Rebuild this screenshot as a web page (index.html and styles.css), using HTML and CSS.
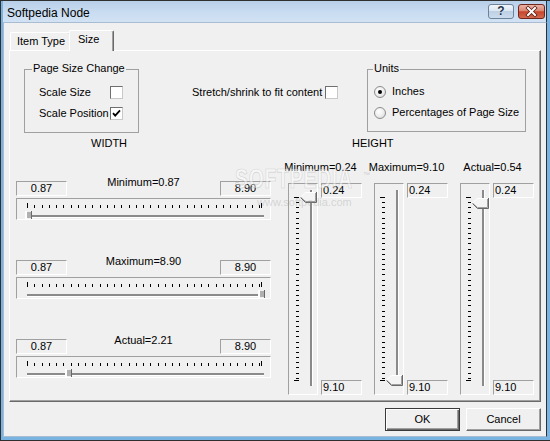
FILE: index.html
```html
<!DOCTYPE html>
<html>
<head>
<meta charset="utf-8">
<title>Softpedia Node</title>
<link rel="stylesheet" href="styles.css">
</head>
<body>
<div class="window">
  <div class="titlebar">
    <span class="title">Softpedia Node</span>
    <div class="caption-buttons">
      <div class="cap-btn help"><span>?</span></div>
      <div class="cap-btn close">
        <svg width="25" height="13" viewBox="0 0 25 13">
          <path d="M9 3L16 10M16 3L9 10" stroke="#5b1c12" stroke-width="3.6" stroke-linecap="square" fill="none"/>
          <path d="M9 3L16 10M16 3L9 10" stroke="#fff" stroke-width="2" stroke-linecap="square" fill="none"/>
        </svg>
      </div>
    </div>
  </div>
  <div class="client">
    <div class="tabs">
      <div class="tab">Item Type</div>
      <div class="tab active">Size</div>
    </div>
    <div class="panel">
      <div class="top-row">
        <div class="group page-size">
          <div class="legend">Page Size Change</div>
          <div class="check-row first"><span class="check-label">Scale Size</span><span class="checkbox"></span></div>
          <div class="check-row second"><span class="check-label">Scale Position</span><span class="checkbox"><svg width="11" height="11" viewBox="0 0 11 11"><path d="M2 5.2L4.2 7.6L9 2.4" stroke="#000" stroke-width="1.8" fill="none"/></svg></span></div>
        </div>
        <div class="stretch"><span>Stretch/shrink to fit content</span><span class="checkbox"></span></div>
        <div class="group units">
          <div class="legend">Units</div>
          <div class="radio-row first"><span class="radio on"></span><span>Inches</span></div>
          <div class="radio-row second"><span class="radio"></span><span>Percentages of Page Size</span></div>
        </div>
      </div>
      <div class="axis-row"><span class="axis-width">WIDTH</span><span>HEIGHT</span></div>
      <div class="lower">
        <div class="width-col">
          <div class="hgroup">
            <div class="hhead"><span class="field center">0.87</span><span class="hlabel">Minimum=0.87</span><span class="field center">8.90</span></div>
            <div class="hslider">
              <svg width="253" height="20" viewBox="0 0 253 20">
                <use href="#hticks"/>
                <rect x="10" y="16" width="237" height="2" fill="#8a8a8a"/>
                <rect x="10" y="18" width="237" height="1" fill="#fff"/>
                <rect x="8" y="12" width="2" height="8" fill="#fff"/>
                <rect x="10" y="13" width="4" height="6" fill="#b0b0b0"/>
                <rect x="14" y="12" width="1" height="8" fill="#696969"/>
              </svg>
            </div>
          </div>
          <div class="hgroup">
            <div class="hhead"><span class="field center">0.87</span><span class="hlabel">Maximum=8.90</span><span class="field center">8.90</span></div>
            <div class="hslider">
              <svg width="253" height="20" viewBox="0 0 253 20">
                <use href="#hticks"/>
                <rect x="10" y="16" width="237" height="2" fill="#8a8a8a"/>
                <rect x="10" y="18" width="237" height="1" fill="#fff"/>
                <rect x="241" y="12" width="2" height="8" fill="#fff"/>
                <rect x="243" y="13" width="4" height="6" fill="#b0b0b0"/>
                <rect x="247" y="12" width="1" height="8" fill="#696969"/>
              </svg>
            </div>
          </div>
          <div class="hgroup">
            <div class="hhead"><span class="field center">0.87</span><span class="hlabel">Actual=2.21</span><span class="field center">8.90</span></div>
            <div class="hslider">
              <svg width="253" height="20" viewBox="0 0 253 20">
                <use href="#hticks"/>
                <rect x="10" y="16" width="237" height="2" fill="#8a8a8a"/>
                <rect x="10" y="18" width="237" height="1" fill="#fff"/>
                <rect x="48" y="12" width="2" height="8" fill="#fff"/>
                <rect x="50" y="13" width="4" height="6" fill="#b0b0b0"/>
                <rect x="54" y="12" width="1" height="8" fill="#696969"/>
              </svg>
            </div>
          </div>
        </div>
        <div class="height-cols">
          <div class="vcol">
            <div class="vlabel"><span>Minimum=0.24</span></div>
            <div class="vbody">
              <div class="vslider">
                <svg width="28" height="210" viewBox="0 0 28 210">
                  <use href="#vticks"/>
                  <rect x="21" y="6" width="2" height="196" fill="#8a8a8a"/>
                  <rect x="23" y="6" width="1" height="196" fill="#fff"/>
                  <polygon points="11,13 16,8 27,8 27,18 16,18" fill="#f4f4f4"/>
                  <path d="M11.5 13L16.5 8.5H26.5" stroke="#fff" fill="none"/>
                  <path d="M12 13.5L16.5 17.5H26.5V9" stroke="#a0a0a0" fill="none"/>
                  <path d="M11.5 13.5L16.5 18.5H27.5V8" stroke="#696969" fill="none"/>
                </svg>
              </div>
              <div class="vfields"><span class="field">0.24</span><span class="field">9.10</span></div>
            </div>
          </div>
          <div class="vcol">
            <div class="vlabel"><span>Maximum=9.10</span></div>
            <div class="vbody">
              <div class="vslider">
                <svg width="28" height="210" viewBox="0 0 28 210">
                  <use href="#vticks"/>
                  <rect x="21" y="6" width="2" height="196" fill="#8a8a8a"/>
                  <rect x="23" y="6" width="1" height="196" fill="#fff"/>
                  <polygon points="11,196 16,191 27,191 27,201 16,201" fill="#f4f4f4"/>
                  <path d="M11.5 196L16.5 191.5H26.5" stroke="#fff" fill="none"/>
                  <path d="M12 196.5L16.5 200.5H26.5V192" stroke="#a0a0a0" fill="none"/>
                  <path d="M11.5 196.5L16.5 201.5H27.5V191" stroke="#696969" fill="none"/>
                </svg>
              </div>
              <div class="vfields"><span class="field">0.24</span><span class="field">9.10</span></div>
            </div>
          </div>
          <div class="vcol">
            <div class="vlabel"><span>Actual=0.54</span></div>
            <div class="vbody">
              <div class="vslider">
                <svg width="28" height="210" viewBox="0 0 28 210">
                  <use href="#vticks"/>
                  <rect x="21" y="6" width="2" height="196" fill="#8a8a8a"/>
                  <rect x="23" y="6" width="1" height="196" fill="#fff"/>
                  <polygon points="11,19 16,14 27,14 27,24 16,24" fill="#f4f4f4"/>
                  <path d="M11.5 19L16.5 14.5H26.5" stroke="#fff" fill="none"/>
                  <path d="M12 19.5L16.5 23.5H26.5V15" stroke="#a0a0a0" fill="none"/>
                  <path d="M11.5 19.5L16.5 24.5H27.5V14" stroke="#696969" fill="none"/>
                </svg>
              </div>
              <div class="vfields"><span class="field">0.24</span><span class="field">9.10</span></div>
            </div>
          </div>
        </div>
      </div>
      <div class="watermark"><span class="wm-big">SOFTPEDIA</span><span class="wm-tm">™</span><span class="wm-small">www.softpedia.com</span></div>
    </div>
    <div class="buttons">
      <div class="btn default">OK</div>
      <div class="btn">Cancel</div>
    </div>
  </div>
</div>
<svg class="defs" width="0" height="0">
  <defs>
    <path id="hticks" stroke="#000" fill="none" d="M10.5 4v5M17.5 6v3M25.5 6v3M32.5 6v3M39.5 6v3M46.5 6v3M54.5 6v3M61.5 6v3M68.5 6v3M75.5 6v3M83.5 6v3M90.5 6v3M97.5 6v3M104.5 6v3M112.5 6v3M119.5 6v3M126.5 6v3M133.5 6v3M141.5 6v3M148.5 6v3M155.5 6v3M162.5 6v3M170.5 6v3M177.5 6v3M184.5 6v3M191.5 6v3M199.5 6v3M206.5 6v3M213.5 6v3M220.5 6v3M228.5 6v3M235.5 6v3M242.5 6v3M244.5 4v5"/>
    <path id="vticks" stroke="#000" fill="none" d="M5 13.5h5M7 18.5h3M7 23.5h3M7 28.5h3M7 34.5h3M7 39.5h3M7 44.5h3M7 49.5h3M7 54.5h3M7 59.5h3M7 65.5h3M7 70.5h3M7 75.5h3M7 80.5h3M7 85.5h3M7 90.5h3M7 96.5h3M7 101.5h3M7 106.5h3M7 111.5h3M7 116.5h3M7 121.5h3M7 127.5h3M7 132.5h3M7 137.5h3M7 142.5h3M7 147.5h3M7 152.5h3M7 158.5h3M7 163.5h3M7 168.5h3M7 173.5h3M7 178.5h3M7 183.5h3M7 189.5h3M7 194.5h3M5 196.5h5"/>
  </defs>
</svg>
</body>
</html>
```

FILE: styles.css
```css
* { box-sizing: border-box; }
html, body { margin: 0; padding: 0; }
body {
  width: 550px;
  height: 441px;
  overflow: hidden;
  background: #7db6e4;
  font-family: "Liberation Sans", Arial, sans-serif;
  font-size: 11px;
  line-height: 13px;
  color: #000;
}

.window {
  width: 550px;
  height: 441px;
  display: flex;
  flex-direction: column;
  background: #79b3e2;
  border: 1px solid #2f2f2f;
  border-right: 0;
  padding: 0 3px 3px 2px;
}

/* title bar */
.titlebar {
  flex: none;
  height: 21px;
  display: flex;
  align-items: flex-start;
  background: linear-gradient(#b8cfe9, #c9dcf1 55%, #d2e2f4);
  border-right: 1px solid #2f2f2f;
  padding-left: 4px;
}
.title {
  font-size: 12px;
  line-height: 16px;
  padding-top: 4px;
  color: #000;
}
.caption-buttons {
  margin-left: auto;
  margin-right: 1px;
  margin-top: 3px;
  display: flex;
  gap: 4px;
}
.cap-btn {
  height: 15px;
  border-radius: 3px;
  display: flex;
  align-items: center;
  justify-content: center;
}
.cap-btn.help {
  width: 26px;
  border: 1px solid #6e8399;
  background: linear-gradient(#f2f6fb, #dbe6f1 45%, #bed0e4 50%, #cbdcee);
  color: #23344a;
  font-size: 12px;
  font-weight: bold;
  text-shadow: 0 0 1px #fff;
}
.cap-btn.close {
  width: 27px;
  border: 1px solid #70261b;
  background: linear-gradient(#eab4a6, #d98672 45%, #c7452b 52%, #d26a50);
}

/* client area */
.client {
  flex: 1;
  display: flex;
  flex-direction: column;
  background: #f0f0f0;
  border: 1px solid #a9bdd2;
  border-right-color: #2f2f2f;
  padding: 7px 5px 0 5px;
}

.tabs {
  height: 20px;
  display: flex;
  align-items: flex-end;
  padding-left: 1px;
}
.tab {
  height: 18px;
  width: 61px;
  border: 1px solid #fff;
  border-right-color: #696969;
  border-bottom: 0;
  border-radius: 2px 2px 0 0;
  box-shadow: inset -1px 0 #a0a0a0;
  padding: 2px 0 0 6px;
  background: #f0f0f0;
}
.tab.active {
  position: relative;
  z-index: 1;
  height: 21px;
  width: 45px;
  margin-left: -2px;
  margin-bottom: -1px;
  padding: 2px 0 0 8px;
}

.panel {
  position: relative;
  height: 352px;
  border: 1px solid #fff;
  border-right-color: #696969;
  border-bottom-color: #696969;
  box-shadow: inset -1px -1px #a0a0a0;
}

/* top row */
.top-row {
  display: flex;
  align-items: flex-start;
  margin-top: 18px;
}
.group {
  border: 1px solid #a0a0a0;
}
.legend {
  width: fit-content;
  margin-top: -8px;
  padding: 0 1px;
  background: #f0f0f0;
  white-space: nowrap;
}
.page-size {
  margin-left: 14px;
  width: 115px;
  height: 64px;
  padding-left: 14px;
}
.page-size .legend { margin-left: -7px; }
.check-row {
  display: flex;
  align-items: center;
  height: 13px;
}
.check-row.first { margin-top: 11px; }
.check-row.second { margin-top: 8px; }
.check-label { width: 71px; white-space: nowrap; }
.checkbox {
  flex: none;
  width: 13px;
  height: 13px;
  background: #fff;
  border: 1px solid;
  border-color: #6f6f6f #c8c8c8 #c8c8c8 #6f6f6f;
  display: flex;
}
.stretch {
  margin-left: 53px;
  margin-top: 17px;
  display: flex;
  align-items: center;
  height: 13px;
  white-space: nowrap;
}
.stretch .checkbox { margin-left: 3px; }

.units {
  margin-left: auto;
  margin-right: 14px;
  width: 159px;
  height: 63px;
  padding-left: 6px;
}
.units .legend { margin-left: -1px; }
.radio-row {
  display: flex;
  align-items: center;
  height: 13px;
  white-space: nowrap;
}
.radio-row.first { margin-top: 10px; }
.radio-row.second { margin-top: 8px; }
.radio {
  flex: none;
  width: 12px;
  height: 12px;
  margin-right: 6px;
  border-radius: 50%;
  border: 1px solid #8c8c8c;
  background: radial-gradient(circle at 40% 35%, #ffffff, #ececec 55%, #cfcfcf);
  display: flex;
  align-items: center;
  justify-content: center;
}
.radio.on::after {
  content: "";
  width: 4px;
  height: 4px;
  border-radius: 50%;
  background: #000;
}

/* axis labels */
.axis-row {
  display: flex;
  margin-top: 4px;
  padding-left: 81px;
  height: 13px;
}
.axis-width { width: 261px; }

/* lower area */
.lower {
  display: flex;
  margin-top: 11px;
}
.width-col {
  margin-left: 6px;
  width: 255px;
  padding-top: 15px;
}
.hgroup + .hgroup { margin-top: 35px; }
.hhead {
  display: flex;
  align-items: flex-start;
  height: 20px;
}
.hhead .field { margin-top: 5px; }
.hlabel {
  flex: 1;
  text-align: center;
  white-space: nowrap;
}
.field {
  display: block;
  height: 15px;
  border: 1px solid;
  border-color: #a0a0a0 #fff #fff #a0a0a0;
  padding-left: 1px;
  line-height: 13px;
  white-space: nowrap;
}
.field.center {
  width: 51px;
  text-align: center;
  padding-left: 0;
}
.hslider {
  margin-top: 2px;
  height: 22px;
  border: 1px solid;
  border-color: #a0a0a0 #fff #fff #a0a0a0;
}
.hslider svg, .vslider svg { display: block; }

.height-cols {
  display: flex;
  gap: 12px;
  margin-left: 17px;
}
.vcol { width: 74px; }
.vlabel {
  width: 65px;
  height: 13px;
  margin-bottom: 9px;
  display: flex;
  justify-content: center;
  white-space: nowrap;
}
.vbody {
  display: flex;
  gap: 3px;
  height: 212px;
}
.vslider {
  width: 30px;
  height: 212px;
  border: 1px solid;
  border-color: #a0a0a0 #fff #fff #a0a0a0;
}
.vfields {
  width: 41px;
  display: flex;
  flex-direction: column;
  justify-content: space-between;
}

/* watermark */
.watermark {
  position: absolute;
  left: 225px;
  top: 115px;
  width: 140px;
  pointer-events: none;
}
.wm-big {
  display: inline-block;
  font-size: 27px;
  line-height: 27px;
  font-weight: bold;
  color: rgba(255, 255, 255, 0.45);
  -webkit-text-stroke: 0.7px rgba(150, 150, 150, 0.4);
  transform: scaleX(0.72);
  transform-origin: left top;
  letter-spacing: 1px;
}
.wm-tm {
  position: absolute;
  left: 128px;
  top: 2px;
  font-size: 7px;
  color: rgba(150, 150, 150, 0.4);
}
.wm-small {
  display: block;
  margin-left: 22px;
  margin-top: 3px;
  font-size: 11px;
  color: rgba(140, 140, 140, 0.3);
}

/* dialog buttons */
.buttons {
  display: flex;
  justify-content: flex-end;
  gap: 6px;
  margin-top: 6px;
}
.btn {
  width: 75px;
  height: 23px;
  display: flex;
  align-items: center;
  justify-content: center;
  background: #f0f0f0;
  border: 1px solid;
  border-color: #fff #696969 #696969 #fff;
  box-shadow: inset -1px -1px #a0a0a0;
}
.btn.default {
  border-color: #3a3a3a;
  box-shadow: inset 1px 1px #fff, inset -1px -1px #696969, inset -2px -2px #a0a0a0;
}

.defs { display: block; }
```
